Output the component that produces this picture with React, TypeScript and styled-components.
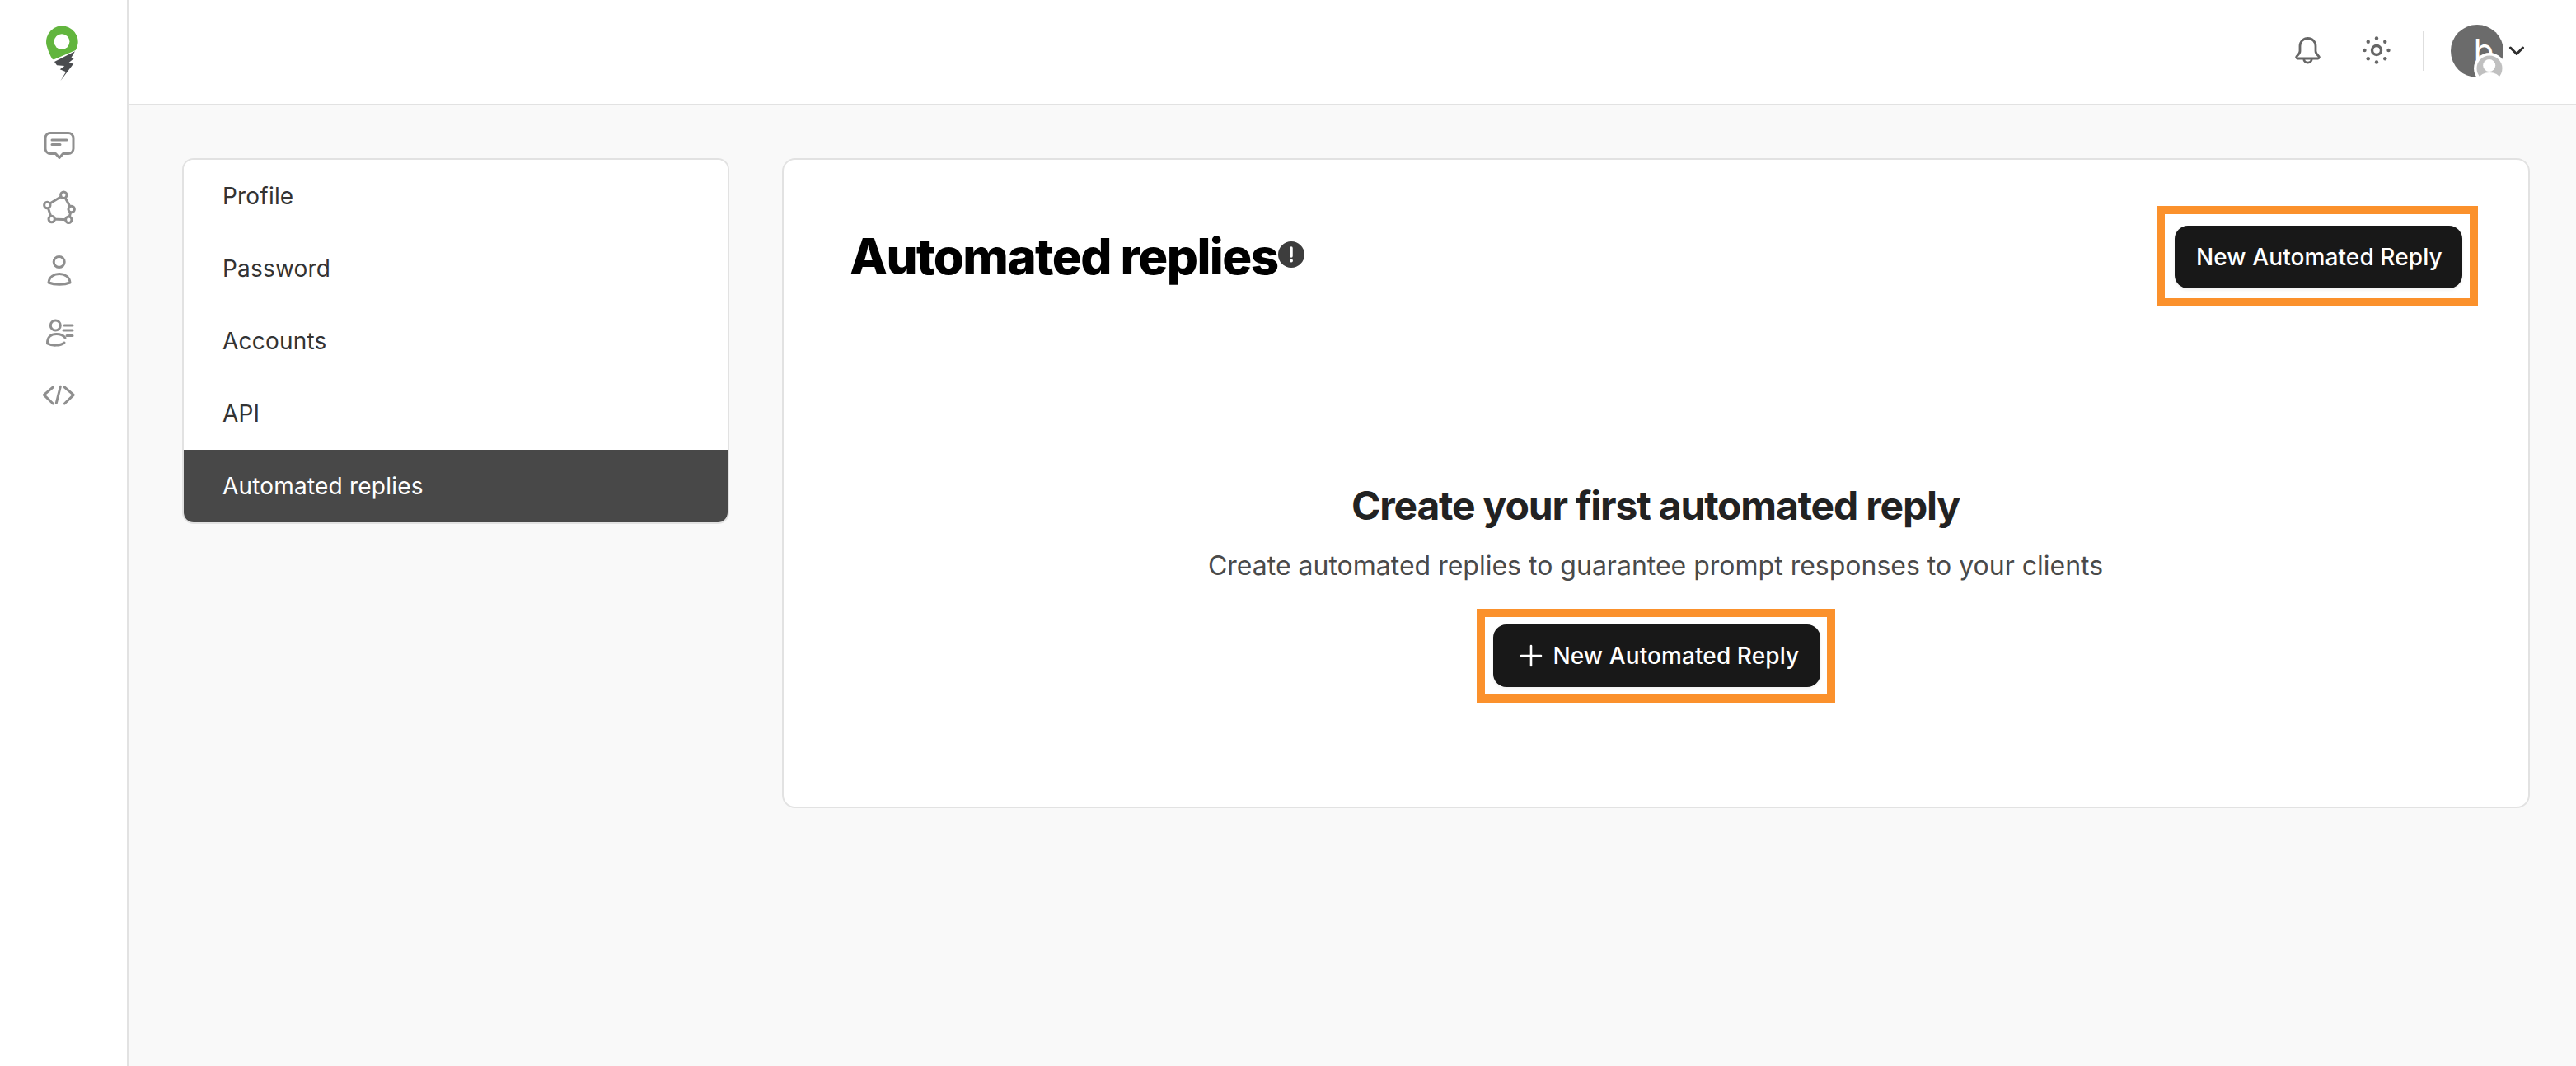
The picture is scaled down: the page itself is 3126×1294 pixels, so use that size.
import React from "react";
import styled, { createGlobalStyle } from "styled-components";

const Global = createGlobalStyle`
  html, body { margin: 0; padding: 0; background: #f9f9f9; }
  body { font-family: Inter, "Liberation Sans", sans-serif; overflow: hidden; }
  * { box-sizing: border-box; }
`;

const Shell = styled.div`
  display: grid;
  grid-template-columns: 156px 1fr;
  width: 3126px;
  height: 1294px;
  background: #f9f9f9;
`;

const Rail = styled.aside`
  display: flex;
  flex-direction: column;
  background: #fff;
  border-right: 2px solid #e2e2e2;
`;

const LogoSlot = styled.div`
  height: 138px;
  padding: 25px 0 0 50px;
`;

const RailSlot = styled.div`
  height: 76px;
  padding-left: 50px;
  display: flex;
  align-items: center;
`;

const RailIcon = styled.svg`
  width: 44px;
  height: 44px;
  fill: none;
  stroke: #8f8f8f;
  stroke-width: 3;
  stroke-linecap: round;
  stroke-linejoin: round;
`;

const Page = styled.div`
  display: flex;
  flex-direction: column;
  min-width: 0;
`;

const Header = styled.header`
  height: 128px;
  display: flex;
  justify-content: flex-end;
  align-items: center;
  padding: 0 62px 2px 0;
  background: #fff;
  border-bottom: 2px solid #e2e2e2;
`;

const HeaderIcon = styled.svg`
  width: 40px;
  height: 40px;
  fill: none;
  stroke: #666;
  stroke-width: 2.8;
  stroke-linecap: round;
  stroke-linejoin: round;
  margin-right: 44px;
  margin-top: -2px;
  &:nth-of-type(2) { margin-right: 36px; }
`;

const SunRing = styled.circle`
  stroke-width: 3.4;
`;

const SunDot = styled.circle`
  fill: #666;
  stroke: none;
`;

const Divider = styled.div`
  width: 2px;
  height: 48px;
  background: #dedede;
  margin-right: 32px;
`;

const AvatarBox = styled.div`
  position: relative;
  width: 64px;
  height: 64px;
  overflow: hidden;
`;

const AvatarCircle = styled.div`
  width: 64px;
  height: 64px;
  border-radius: 50%;
  background: #6b6b6b;
  color: #fff;
  font-size: 40px;
  line-height: 64px;
  text-align: center;
  padding-left: 16px;
`;

const AvatarBadge = styled.svg`
  position: absolute;
  left: 28px;
  top: 34px;
  width: 38px;
  height: 38px;
`;

const Chevron = styled.svg`
  width: 20px;
  height: 20px;
  margin-left: 6px;
  fill: none;
  stroke: #2e2e2e;
  stroke-width: 3;
  stroke-linecap: round;
  stroke-linejoin: round;
`;

const Content = styled.main`
  display: grid;
  grid-template-columns: 664px 2121px;
  column-gap: 64px;
  align-items: start;
  padding: 64px 0 0 65px;
`;

const Menu = styled.nav`
  display: flex;
  flex-direction: column;
  background: #fff;
  border: 2px solid #e2e2e2;
  border-radius: 14px;
  overflow: hidden;
`;

const MenuItem = styled.div<{ $active?: boolean }>`
  height: 88px;
  display: flex;
  align-items: center;
  padding-left: 47px;
  font-size: 28px;
  letter-spacing: 0.2px;
  color: ${(p) => (p.$active ? "#fff" : "#333")};
  background: ${(p) => (p.$active ? "#484848" : "#fff")};
`;

const Card = styled.section`
  display: flex;
  flex-direction: column;
  height: 789px;
  background: #fff;
  border: 2px solid #e2e2e2;
  border-radius: 16px;
  padding: 56px 61px 0 80px;
`;

const TitleRow = styled.div`
  display: flex;
  justify-content: space-between;
  align-items: center;
`;

const TitleGroup = styled.div`
  display: flex;
  align-items: center;
`;

const Title = styled.h1`
  margin: 0;
  font-size: 60px;
  line-height: 72px;
  font-weight: 800;
  letter-spacing: -1.6px;
  color: #000;
`;

const AlertIcon = styled.svg`
  width: 32px;
  height: 32px;
  margin-left: 1px;
  margin-top: -4px;
`;

const Highlight = styled.div<{ $pad: string }>`
  border: 10px solid #fb912c;
  padding: ${(p) => p.$pad};
  display: inline-flex;
`;

const DarkButton = styled.button`
  display: inline-flex;
  align-items: center;
  height: 76px;
  border: 0;
  border-radius: 16px;
  background: #181818;
  color: #fff;
  font-family: inherit;
  font-size: 28px;
  font-weight: 500;
  letter-spacing: 0.1px;
  box-shadow: 0 2px 4px rgba(0, 0, 0, 0.06);
  white-space: nowrap;
`;

const HeaderButton = styled(DarkButton)`
  width: 349px;
  padding: 0 0 0 26px;
`;

const EmptyButton = styled(DarkButton)`
  width: 397px;
  padding: 0 0 0 30px;
`;

const PlusIcon = styled.svg`
  width: 32px;
  height: 32px;
  margin-right: 11px;
  fill: none;
  stroke: #fff;
  stroke-width: 2.6;
  stroke-linecap: round;
`;

const Empty = styled.div`
  display: flex;
  flex-direction: column;
  align-items: center;
  margin: 212px 0 0 0;
  padding-right: 20px;
`;

const EmptyTitle = styled.h2`
  margin: 0;
  font-size: 48px;
  line-height: 60px;
  font-weight: 700;
  letter-spacing: -1.18px;
  color: #222;
`;

const EmptyText = styled.p`
  margin: 23px 0 32px;
  font-size: 32px;
  line-height: 40px;
  color: #4a4a4a;
`;

const Logo = () => (
  <svg width="50" height="80" viewBox="0 0 50 80" aria-label="logo">
    <path
      d="M41.7 36A19.3 19.3 0 1 0 6.4 29.5C8 36 10.5 42 13.3 46.5Q14.5 47.8 16 47Z"
      fill="#62b53e"
    />
    <circle cx="25" cy="25.6" r="9.4" fill="#fff" />
    <path
      d="M41 37.3 16 50 19 54.3 28.3 55 22.7 59.3 30 62.3 23.3 73.3 39.3 52.3 32.7 51.7 40 45.7 36 45.7Z"
      fill="#4a4c4f"
    />
  </svg>
);

const NET = [
  [27.3, 6.7],
  [36.7, 24],
  [33.3, 36.7],
  [12.7, 36],
  [7.3, 19],
];

const items = ["Profile", "Password", "Accounts", "API"];

export default function App() {
  return (
    <Shell>
      <Global />
      <Rail>
        <LogoSlot>
          <Logo />
        </LogoSlot>
        <RailSlot>
          <RailIcon viewBox="0 0 44 44">
            <path d="M11 7.5h22a6 6 0 0 1 6 6v13a6 6 0 0 1-6 6h-6.500l-4.500 5-4.500-5H11a6 6 0 0 1-6-6v-13a6 6 0 0 1 6-6z" />
            <path d="M13 16h18M13 21.500h10" />
          </RailIcon>
        </RailSlot>
        <RailSlot>
          <RailIcon viewBox="0 0 44 44">
            <polygon points={NET.map((p) => p.join(",")).join(" ")} />
            {NET.map(([x, y]) => (
              <circle key={x} cx={x} cy={y} r="3.7" fill="#fff" />
            ))}
          </RailIcon>
        </RailSlot>
        <RailSlot>
          <RailIcon viewBox="0 0 44 44">
            <circle cx="21.700" cy="12" r="6.500" />
            <path d="M9 37C10 23 34 23 35 37 28 40 16 40 9 37Z" />
          </RailIcon>
        </RailSlot>
        <RailSlot>
          <RailIcon viewBox="0 0 44 44">
            <circle cx="17.300" cy="13" r="6" />
            <path d="M29 28C27 25 23 23.500 18.500 23.500 12 23.500 7 27 7.500 35 13 38 23 38 28 34" />
            <path d="M28 13h10M27 19h11M31 25.500h7" />
          </RailIcon>
        </RailSlot>
        <RailSlot>
          <RailIcon viewBox="0 0 44 44">
            <path d="M14.300 12 3.300 21.300 14.300 32M23.300 11.300 18.300 31.300M28.300 12 39.300 21.300 28.300 32" />
          </RailIcon>
        </RailSlot>
      </Rail>
      <Page>
        <Header>
          <HeaderIcon viewBox="0 0 40 40">
            <path d="M20.500 5.500c-5.500 0-9.500 4-9.500 9.500v6c0 3-2 4.500-4 6.500-.8 1-.3 2.500 1 2.500h25c1.300 0 1.800-1.500 1-2.500-2-2-4-3.500-4-6.500v-6c0-5.500-4-9.500-9.500-9.500z" />
            <path d="M15.800 30.500a4.700 4.700 0 0 0 9.400 0" />
          </HeaderIcon>
          <HeaderIcon viewBox="0 0 40 40">
            <SunRing cx="20" cy="20" r="5.500" />
            {[0, 45, 90, 135, 180, 225, 270, 315].map((a) => (
              <SunDot
                key={a}
                cx={20 + 14.5 * Math.cos((a * Math.PI) / 180)}
                cy={20 + 14.5 * Math.sin((a * Math.PI) / 180)}
                r="2.200"
              />
            ))}
          </HeaderIcon>
          <Divider />
          <AvatarBox>
            <AvatarCircle>b</AvatarCircle>
            <AvatarBadge viewBox="0 0 38 38">
              <circle cx="19" cy="19" r="19" fill="#fff" />
              <circle cx="19" cy="19" r="15.500" fill="#c0c0c0" />
              <circle cx="18.700" cy="15.500" r="7.500" fill="#fff" />
              <ellipse cx="19" cy="31" rx="12" ry="7" fill="#fff" />
            </AvatarBadge>
          </AvatarBox>
          <Chevron viewBox="0 0 20 20">
            <path d="M2.500 6 10 13.500 17.500 6" />
          </Chevron>
        </Header>
        <Content>
          <Menu>
            {items.map((t) => (
              <MenuItem key={t}>{t}</MenuItem>
            ))}
            <MenuItem $active>Automated replies</MenuItem>
          </Menu>
          <Card>
            <TitleRow>
              <TitleGroup>
                <Title>Automated replies</Title>
                <AlertIcon viewBox="0 0 32 32">
                  <circle cx="16" cy="16" r="16" fill="#3d3d3d" />
                  <path d="M16 8v10" stroke="#fff" strokeWidth="3.500" strokeLinecap="round" />
                  <circle cx="16" cy="23.500" r="2" fill="#fff" />
                </AlertIcon>
              </TitleGroup>
              <Highlight $pad="14px 9px 12px 12px">
                <HeaderButton>New Automated Reply</HeaderButton>
              </Highlight>
            </TitleRow>
            <Empty>
              <EmptyTitle>Create your first automated reply</EmptyTitle>
              <EmptyText>Create automated replies to guarantee prompt responses to your clients</EmptyText>
              <Highlight $pad="9px 8px 9px 10px">
                <EmptyButton>
                  <PlusIcon viewBox="0 0 32 32">
                    <path d="M16 4v24M4 16h24" />
                  </PlusIcon>
                  New Automated Reply
                </EmptyButton>
              </Highlight>
            </Empty>
          </Card>
        </Content>
      </Page>
    </Shell>
  );
}
